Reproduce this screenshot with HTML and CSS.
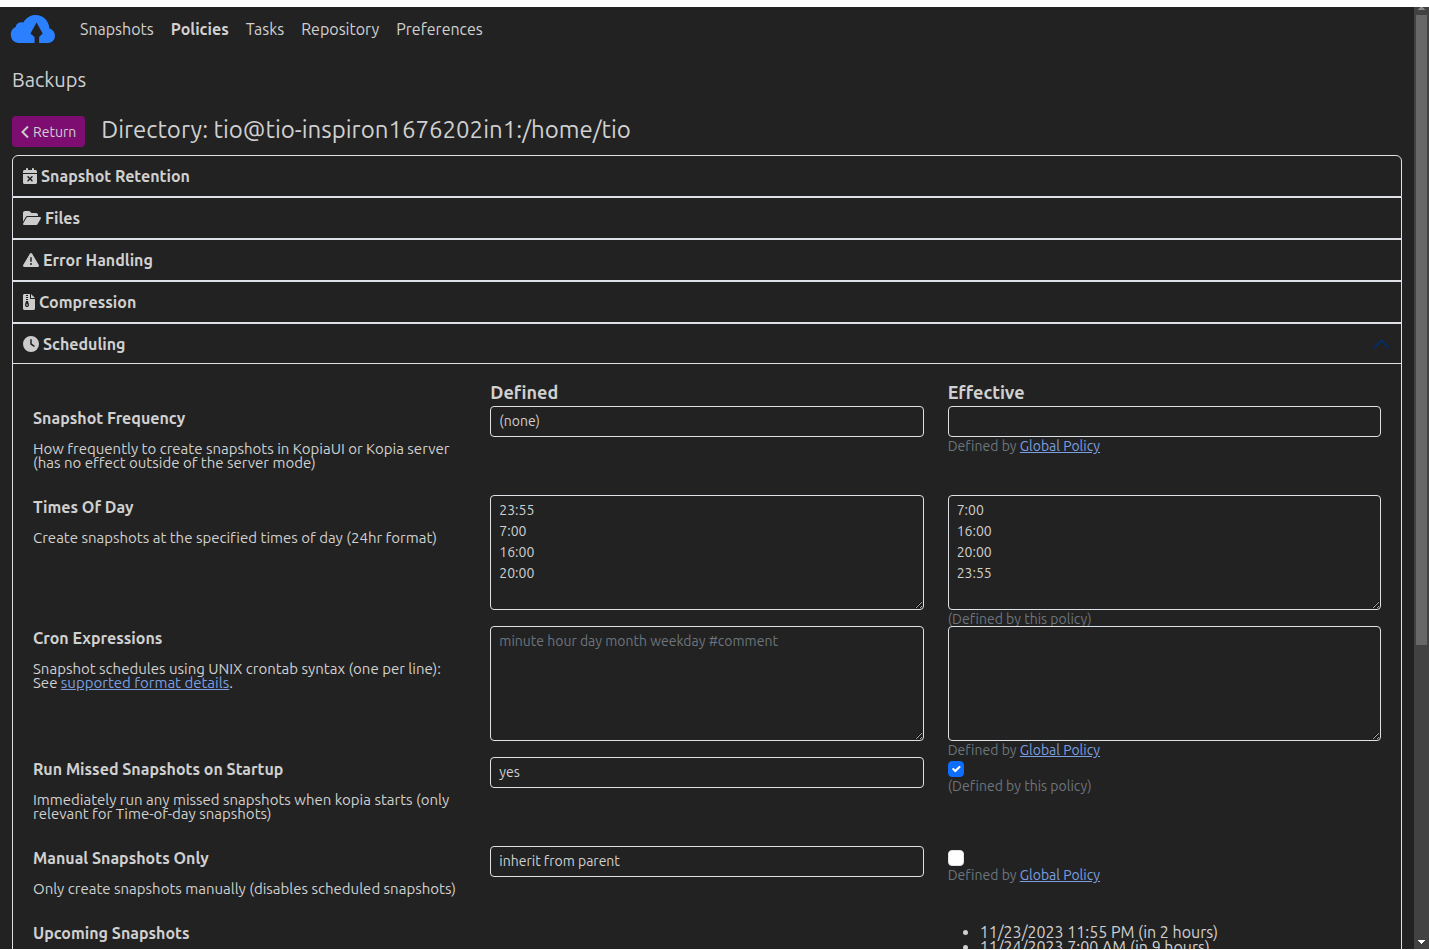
FILE: index.html
```html
<!DOCTYPE html>
<html lang="en">
<head>
<meta charset="utf-8">
<title>KopiaUI - Policies</title>
<link rel="stylesheet" href="styles.css">
</head>
<body>
<div class="window">
  <div class="page">
    <nav class="navbar">
      <a class="brand" href="#" aria-label="Kopia">
        <svg class="logo" viewBox="1 0 45 28" preserveAspectRatio="none" aria-hidden="true">
          <path fill="#2a80ff" d="M9 28A8.500 8.500 0 0 1 6.500 12C7 8.500 10.500 6.500 14 7.500C17 2.500 21 0 26 0C33.500 0 39 5.500 39.500 13.500C43 14.500 45 17.500 45 21A7 7 0 0 1 38 28H29.500V22L33 18.500L27 7.500L21 18.500L25 22V28Z"/>
        </svg>
      </a>
      <a class="nav-link" href="#">Snapshots</a>
      <a class="nav-link active" href="#">Policies</a>
      <a class="nav-link" href="#">Tasks</a>
      <a class="nav-link" href="#">Repository</a>
      <a class="nav-link" href="#">Preferences</a>
    </nav>

    <main class="content">
      <h5 class="repo-name">Backups</h5>
      <div class="title-row">
        <button class="btn-return" type="button">
          <svg class="chevron" viewBox="0 0 8 14" aria-hidden="true"><path d="M7 1.500L1.500 7L7 12.500"/></svg>Return
        </button>
        <h4 class="title">Directory: tio@tio-inspiron1676202in1:/home/tio</h4>
      </div>

      <div class="accordion">
        <section class="item">
          <button class="item-head" type="button">
            <svg class="icon w14" viewBox="0 0 448 512" aria-hidden="true"><path d="M128 0c17.700 0 32 14.300 32 32v32h128V32c0-17.700 14.300-32 32-32s32 14.300 32 32v32h48c26.500 0 48 21.500 48 48v48H0v-48c0-26.500 21.500-48 48-48h48V32c0-17.700 14.300-32 32-32zM0 192h448v272c0 26.500-21.500 48-48 48H48c-26.500 0-48-21.500-48-48V192zm305 105c9.400-9.400 9.400-24.600 0-33.900s-24.600-9.400-33.900 0l-47 47-47-47c-9.400-9.400-24.600-9.400-33.900 0s-9.400 24.600 0 33.900l47 47-47 47c-9.400 9.400-9.400 24.600 0 33.900s24.600 9.400 33.900 0l47-47 47 47c9.400 9.400 24.600 9.400 33.900 0s9.400-24.600 0-33.900l-47-47 47-47z"/></svg>Snapshot Retention
          </button>
        </section>
        <section class="item">
          <button class="item-head" type="button">
            <svg class="icon w18" viewBox="0 0 576 512" aria-hidden="true"><path d="M88.700 223.800L0 375.800V96c0-35.300 28.700-64 64-64h117.500c17 0 33.300 6.700 45.300 18.700l26.500 26.500c12 12 28.300 18.700 45.300 18.700H416c35.300 0 64 28.700 64 64v32H144c-22.800 0-43.800 12.100-55.300 31.800zm27.600 16.100C122.100 230 132.600 224 144 224h400c11.500 0 22 6.100 27.700 16.100s5.700 22.200-.1 32.100l-112 192C453.900 474 443.400 480 432 480H32c-11.500 0-22-6.100-27.700-16.100s-5.700-22.200.1-32.100l112-192z"/></svg>Files
          </button>
        </section>
        <section class="item">
          <button class="item-head" type="button">
            <svg class="icon w16" viewBox="0 0 512 512" aria-hidden="true"><path d="M256 32c14.200 0 27.300 7.500 34.500 19.800l216 368c7.300 12.400 7.300 27.700.2 40.100S486.300 480 472 480H40c-14.300 0-27.600-7.700-34.700-20.100s-7-27.800.2-40.100l216-368C228.700 39.500 241.800 32 256 32zm0 128c-13.300 0-24 10.700-24 24v112c0 13.300 10.700 24 24 24s24-10.700 24-24V184c0-13.300-10.700-24-24-24zm32 224a32 32 0 1 0-64 0 32 32 0 1 0 64 0z"/></svg>Error Handling
          </button>
        </section>
        <section class="item">
          <button class="item-head" type="button">
            <svg class="icon w12" viewBox="0 0 384 512" aria-hidden="true"><path fill-rule="evenodd" d="M48 0C20 0 0 20 0 48v416c0 28 20 48 48 48h288c28 0 48-20 48-48V160H256c-17.700 0-32-14.300-32-32V0H48zm208 0v128h128L256 0zM96 32h64v32H96zM96 96h64v32H96zM96 160h64v32H96zM96 224h64l30 110c12 50-20 82-62 82s-74-32-62-82zm0 112v32h64v-32z"/></svg>Compression
          </button>
        </section>
        <section class="item">
          <button class="item-head open" type="button" aria-expanded="true">
            <svg class="icon w16" viewBox="0 0 512 512" aria-hidden="true"><path d="M256 0a256 256 0 1 1 0 512A256 256 0 1 1 256 0zM232 120v136c0 8 4 15.500 10.700 20l96 64c11 7.400 25.900 4.400 33.300-6.700s4.400-25.900-6.700-33.300L280 243.200V120c0-13.300-10.700-24-24-24s-24 10.700-24 24z"/></svg>Scheduling
            <svg class="toggle" viewBox="0 0 18 10" aria-hidden="true"><path d="M1 9L8.500 1.500L16 9"/></svg>
          </button>

          <div class="item-body">
            <div class="row heads">
              <div class="col-head defined">Defined</div>
              <div class="col-head">Effective</div>
            </div>

            <div class="row">
              <div class="label-col">
                <label class="label" for="freq">Snapshot Frequency</label>
                <p class="help">How frequently to create snapshots in KopiaUI or Kopia server<br>(has no effect outside of the server mode)</p>
              </div>
              <div><select class="control" id="freq"><option>(none)</option></select></div>
              <div>
                <input class="control" type="text" aria-label="Effective snapshot frequency" readonly>
                <div class="origin">Defined by <a href="#">Global Policy</a></div>
              </div>
            </div>

            <div class="row">
              <div class="label-col">
                <label class="label" for="times">Times Of Day</label>
                <p class="help">Create snapshots at the specified times of day (24hr format)</p>
              </div>
              <div><textarea class="control" id="times" rows="5">23:55
7:00
16:00
20:00</textarea></div>
              <div>
                <textarea class="control" rows="5" aria-label="Effective times of day" readonly>7:00
16:00
20:00
23:55</textarea>
                <div class="origin">(Defined by this policy)</div>
              </div>
            </div>

            <div class="row">
              <div class="label-col">
                <label class="label" for="cron">Cron Expressions</label>
                <p class="help">Snapshot schedules using UNIX crontab syntax (one per line):<br>See <a href="#">supported format details</a>.</p>
              </div>
              <div><textarea class="control" id="cron" rows="5" placeholder="minute hour day month weekday #comment"></textarea></div>
              <div>
                <textarea class="control" rows="5" aria-label="Effective cron expressions" readonly></textarea>
                <div class="origin">Defined by <a href="#">Global Policy</a></div>
              </div>
            </div>

            <div class="row">
              <div class="label-col">
                <label class="label" for="missed">Run Missed Snapshots on Startup</label>
                <p class="help">Immediately run any missed snapshots when kopia starts (only<br>relevant for Time-of-day snapshots)</p>
              </div>
              <div><select class="control" id="missed"><option>yes</option></select></div>
              <div>
                <input class="check" type="checkbox" aria-label="Effective run missed" checked>
                <div class="origin">(Defined by this policy)</div>
              </div>
            </div>

            <div class="row">
              <div class="label-col">
                <label class="label" for="manual">Manual Snapshots Only</label>
                <p class="help">Only create snapshots manually (disables scheduled snapshots)</p>
              </div>
              <div><select class="control" id="manual"><option>inherit from parent</option></select></div>
              <div>
                <input class="check" type="checkbox" aria-label="Effective manual only">
                <div class="origin">Defined by <a href="#">Global Policy</a></div>
              </div>
            </div>

            <div class="row">
              <div class="label-col"><div class="label">Upcoming Snapshots</div></div>
              <div></div>
              <ul class="upcoming">
                <li>11/23/2023 11:55 PM (in 2 hours)</li>
                <li>11/24/2023 7:00 AM (in 9 hours)</li>
              </ul>
            </div>
          </div>
        </section>
      </div>
    </main>
  </div>

  <div class="scrollbar" aria-hidden="true">
    <svg class="arrow up" viewBox="0 0 7 3"><path d="M2 0H5V1H6V2H7V3H0V2H1V1H2Z"/></svg>
    <div class="thumb"></div>
    <svg class="arrow down" viewBox="0 0 7 4"><path d="M0 0H7V1H6V2H5V3H4V4H3V3H2V2H1V1H0Z"/></svg>
  </div>
</div>
</body>
</html>
```
FILE: styles.css
```css
* { box-sizing: border-box; }

body {
  margin: 0;
  background: #fff;
  color: #d0d0d0;
  font: 16px/16px Ubuntu, "Noto Sans", sans-serif;
  font-variant-ligatures: none;
}

h4, h5, p, ul { margin: 0; font-weight: 400; }
button, input, select, textarea { font: inherit; color: inherit; }
a { color: #7c9fe0; }

.window {
  display: flex;
  height: 100vh;
  padding: 7px 0 1px;
  overflow: hidden;
}

.page {
  flex: 1;
  min-width: 0;
  overflow: hidden;
  background: #222;
}

.navbar {
  display: flex;
  align-items: center;
  gap: 17px;
  height: 44px;
  padding: 0 10px;
}
.brand { margin-right: 7px; }
.logo { display: block; width: 46px; height: 28px; }
.nav-link { color: inherit; text-decoration: none; }
.nav-link.active { font-weight: 700; }

.content { padding: 17px 12px 0; }
.repo-name { font-size: 20px; line-height: 24px; }

.title-row {
  display: flex;
  align-items: flex-start;
  gap: 16px;
  margin: 24px 0 8px;
}
.btn-return {
  display: flex;
  align-items: center;
  gap: 4px;
  height: 31px;
  padding: 0 9px;
  border: 0;
  border-radius: 4px;
  background: #7d0d70;
  font-size: 14px;
}
.chevron { width: 8px; height: 14px; fill: none; stroke: #ccc; stroke-width: 2; }
.title { font-size: 24px; line-height: 28px; }

.item { border: 1px solid #dee2e6; }
.item:first-child { border-radius: 6px 6px 0 0; }
.item-head {
  display: flex;
  align-items: center;
  gap: 4px;
  width: 100%;
  height: 40px;
  padding: 0 10px;
  border: 0;
  background: none;
  font-weight: 700;
  text-align: left;
}
.item-head.open { height: 39px; }
.icon { height: 16px; fill: #ccc; }
.w12 { width: 12px; }
.w14 { width: 14px; }
.w16 { width: 16px; }
.w18 { width: 18px; }
.toggle {
  width: 18px;
  height: 10px;
  margin-left: auto;
  fill: none;
  stroke: #052c65;
  stroke-width: 2;
}

.item-body {
  padding: 20px;
  border-top: 1px solid #dee2e6;
}
.row {
  display: grid;
  grid-template-columns: repeat(3, minmax(0, 1fr));
  column-gap: 24px;
}
.col-head { font-size: 18px; line-height: 16px; font-weight: 700; padding-bottom: 6px; }
.defined { grid-column: 2; }

.label {
  display: block;
  padding: 4px 0;
  font-weight: 700;
}
.help {
  margin: 12px 0 25px;
  font-size: 15px;
  line-height: 14px;
  white-space: nowrap;
}

.control {
  display: block;
  width: 100%;
  padding: 4px 8px;
  border: 1px solid #dee2e6;
  border-radius: 4px;
  background: #222;
  font-size: 14px;
  line-height: 21px;
  appearance: none;
  outline: 0;
}
input.control, select.control { height: 31px; }
textarea.control { resize: vertical; }
.control::placeholder { color: #6c757d; }

.origin {
  margin-bottom: -2px;
  color: #6c757d;
  font-size: 14px;
  line-height: 18px;
}

.check {
  display: block;
  width: 16px;
  height: 16px;
  margin: 4px 0 0;
  border: 1px solid #dee2e6;
  border-radius: 4px;
  background: #fff;
  appearance: none;
}
.check:checked {
  border-color: #0d6efd;
  background: #0d6efd url("data:image/svg+xml,%3Csvg xmlns='http://www.w3.org/2000/svg' viewBox='0 0 20 20'%3E%3Cpath fill='none' stroke='%23fff' stroke-linecap='round' stroke-linejoin='round' stroke-width='3' d='m6 10 3 3 6-6'/%3E%3C/svg%3E") center / contain no-repeat;
}

.upcoming { padding: 4px 0 0 32px; line-height: 15px; }

.scrollbar {
  display: flex;
  flex-direction: column;
  align-items: center;
  width: 15px;
  background: #424242;
}
.thumb { flex: 0 1 630px; width: 11px; margin-top: 5px; background: #686868; }
.arrow { flex: none; width: 7px; height: 4px; }
.up { height: 3px; fill: #858585; }
.down { margin: auto 0 5px; fill: #fff; }
```
